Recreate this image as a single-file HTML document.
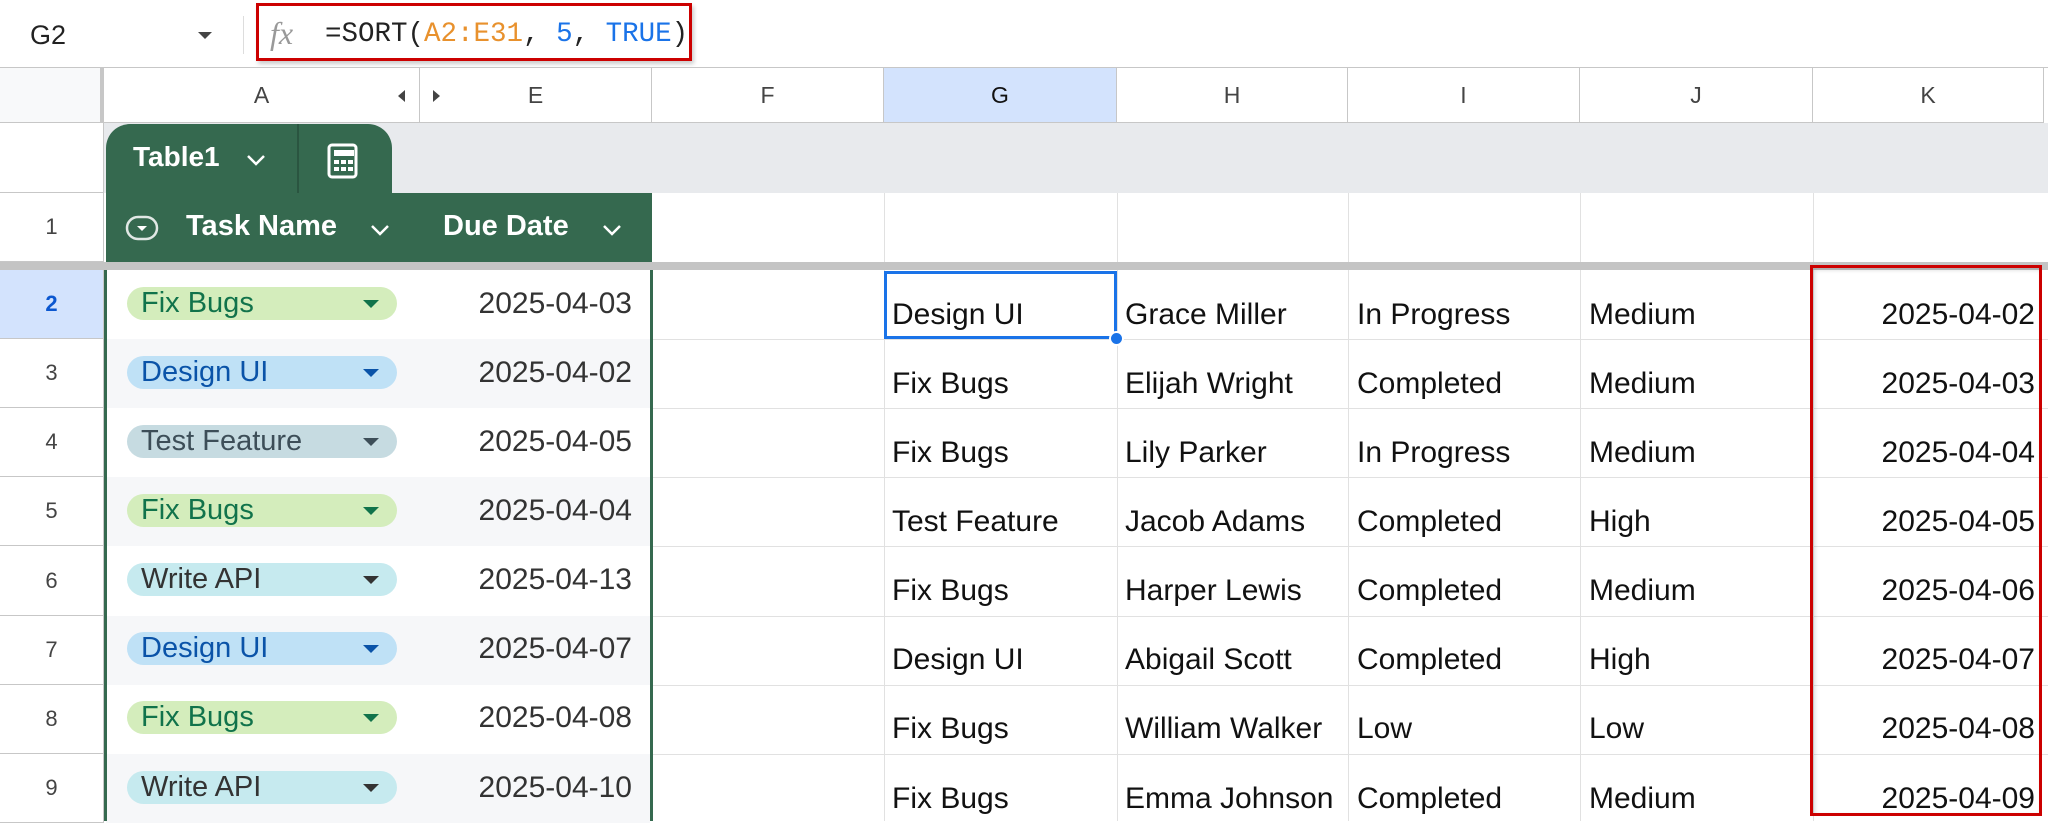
<!DOCTYPE html><html><head><style>
*{margin:0;padding:0;box-sizing:border-box}
body{width:2048px;height:821px;overflow:hidden;background:#fff;font-family:"Liberation Sans",Arial,sans-serif;position:relative;color:#1f1f1f}
.a{position:absolute}
.vl{position:absolute;width:1px;background:#e1e1e1}
.hl{position:absolute;height:1px;background:#e1e1e1}
.ch{position:absolute;top:68px;height:55px;font-size:23px;color:#444;display:flex;align-items:center;justify-content:center;border-right:1px solid #c7c7c7;border-bottom:1px solid #c7c7c7}
.rn{position:absolute;left:0;width:104px;font-size:22px;color:#444;display:flex;align-items:center;justify-content:center;border-bottom:1px solid #c7c7c7;border-right:1px solid #c7c7c7}
.pill{position:absolute;left:127px;width:270px;height:33px;border-radius:17px;font-size:29px;padding-left:14px;line-height:33px;white-space:nowrap}
.pill:after{content:"";position:absolute;right:18px;top:13px;border-left:8px solid transparent;border-right:8px solid transparent;border-top:8px solid currentColor}
.dt{position:absolute;left:420px;width:212px;text-align:right;font-size:30px;color:#333}
.c{position:absolute;font-size:30px;color:#111;white-space:nowrap}
</style></head><body>
<!-- formula bar -->
<div class="a" style="left:30px;top:20px;font-size:27px;color:#222">G2</div>
<div class="a" style="left:198px;top:32px;border-left:7px solid transparent;border-right:7px solid transparent;border-top:7px solid #444"></div>
<div class="a" style="left:243px;top:16px;width:1px;height:38px;background:#ddd"></div>
<div class="a" style="left:256px;top:3px;width:436px;height:58px;border:3px solid #c00;box-shadow:2px 3px 4px rgba(0,0,0,.2)"></div>
<div class="a" style="left:270px;top:15px;font-family:'Liberation Serif',serif;font-style:italic;font-size:32px;color:#999">fx</div>
<div class="a" style="left:325px;top:19px;font-family:'Liberation Mono',monospace;font-size:27.5px;color:#222;white-space:pre">=SORT(<span style="color:#e8912d">A2:E31</span>, <span style="color:#1a73e8">5</span>, <span style="color:#1a73e8">TRUE</span>)</div>
<div class="a" style="left:0;top:67px;width:2048px;height:1px;background:#c7c7c7"></div>
<!-- column headers -->
<div class="ch" style="left:0;width:104px;background:#f8f9fa;border-right:4px solid #c7c7c7"></div>
<div class="ch" style="left:104px;width:316px">A</div>
<div class="a" style="left:398px;top:90px;border-top:6px solid transparent;border-bottom:6px solid transparent;border-right:7px solid #444"></div>
<div class="a" style="left:433px;top:90px;border-top:6px solid transparent;border-bottom:6px solid transparent;border-left:7px solid #444"></div>
<div class="ch" style="left:420px;width:232px">E</div>
<div class="ch" style="left:652px;width:232px">F</div>
<div class="ch" style="left:884px;width:233px;background:#d3e3fd;color:#111">G</div>
<div class="ch" style="left:1117px;width:231px">H</div>
<div class="ch" style="left:1348px;width:232px">I</div>
<div class="ch" style="left:1580px;width:233px">J</div>
<div class="ch" style="left:1813px;width:231px">K</div>
<!-- tab row -->
<div class="a" style="left:104px;top:123px;width:1944px;height:70px;background:#e8eaed"></div>
<div class="rn" style="top:123px;height:70px"></div>
<div class="a" style="left:106px;top:124px;width:286px;height:70px;background:#35694f;border-radius:24px 24px 0 0"></div>
<div class="a" style="left:297px;top:124px;width:2px;height:69px;background:#2a5540"></div>
<div class="a" style="left:133px;top:141px;font-size:28px;font-weight:bold;color:#fff">Table1</div>
<svg class="a" style="left:245px;top:153px" width="22" height="14"><path d="M3 3l8 8 8-8" stroke="#fff" stroke-width="2.5" fill="none"/></svg>
<svg class="a" style="left:326px;top:140px" width="36" height="40"><rect x="3" y="5" width="27" height="32" rx="3" stroke="#fff" stroke-width="3" fill="none"/><rect x="8" y="10" width="20" height="6" fill="#fff"/><g fill="#fff"><rect x="8" y="20" width="5" height="4"/><rect x="15" y="20" width="5" height="4"/><rect x="22" y="20" width="5" height="4"/><rect x="8" y="27" width="5" height="4"/><rect x="15" y="27" width="5" height="4"/><rect x="22" y="27" width="5" height="4"/></g></svg>
<!-- row 1 -->
<div class="rn" style="top:193px;height:69px">1</div>
<div class="a" style="left:106px;top:193px;width:546px;height:69px;background:#35694f"></div>
<svg class="a" style="left:125px;top:215px" width="34" height="26"><rect x="2" y="2" width="30" height="22" rx="11" stroke="#fff" stroke-width="2.5" fill="none" opacity=".85"/><path d="M12 11h10l-5 5z" fill="#fff"/></svg>
<div class="a" style="left:186px;top:210px;font-size:29px;font-weight:bold;color:#fff">Task Name</div>
<svg class="a" style="left:369px;top:223px" width="22" height="14"><path d="M3 3l8 8 8-8" stroke="#fff" stroke-width="2.5" fill="none"/></svg>
<div class="a" style="left:443px;top:210px;font-size:29px;font-weight:bold;color:#fff">Due Date</div>
<svg class="a" style="left:601px;top:223px" width="22" height="14"><path d="M3 3l8 8 8-8" stroke="#fff" stroke-width="2.5" fill="none"/></svg>
<div class="vl" style="left:884px;top:193px;height:69px"></div><div class="vl" style="left:1117px;top:193px;height:69px"></div><div class="vl" style="left:1348px;top:193px;height:69px"></div><div class="vl" style="left:1580px;top:193px;height:69px"></div><div class="vl" style="left:1813px;top:193px;height:69px"></div>
<div class="a" style="left:0;top:262px;width:2048px;height:8px;background:#c4c4c4"></div>
<!-- data rows backgrounds -->
<div class="a" style="left:106px;top:339px;width:544px;height:69px;background:#f6f7f9"></div>
<div class="a" style="left:106px;top:477px;width:544px;height:69px;background:#f6f7f9"></div>
<div class="a" style="left:106px;top:616px;width:544px;height:69px;background:#f6f7f9"></div>
<div class="a" style="left:106px;top:754px;width:544px;height:69px;background:#f6f7f9"></div>
<div class="a" style="left:104px;top:270px;width:3px;height:551px;background:#35694f"></div>
<div class="a" style="left:650px;top:270px;width:3px;height:551px;background:#35694f"></div>
<!-- grid right -->
<div class="vl" style="left:884px;top:270px;height:551px"></div><div class="vl" style="left:1117px;top:270px;height:551px"></div><div class="vl" style="left:1348px;top:270px;height:551px"></div><div class="vl" style="left:1580px;top:270px;height:551px"></div><div class="vl" style="left:1813px;top:270px;height:551px"></div>
<div class="hl" style="left:653px;top:339px;width:1395px"></div><div class="hl" style="left:653px;top:408px;width:1395px"></div><div class="hl" style="left:653px;top:477px;width:1395px"></div><div class="hl" style="left:653px;top:546px;width:1395px"></div><div class="hl" style="left:653px;top:616px;width:1395px"></div><div class="hl" style="left:653px;top:685px;width:1395px"></div><div class="hl" style="left:653px;top:754px;width:1395px"></div>
<!-- row numbers -->
<div class="rn" style="top:270px;height:69px;background:#d3e3fd;color:#0b57d0;font-weight:bold">2</div>
<div class="rn" style="top:339px;height:69px">3</div>
<div class="rn" style="top:408px;height:69px">4</div>
<div class="rn" style="top:477px;height:69px">5</div>
<div class="rn" style="top:546px;height:70px">6</div>
<div class="rn" style="top:616px;height:69px">7</div>
<div class="rn" style="top:685px;height:69px">8</div>
<div class="rn" style="top:754px;height:69px">9</div>
<!-- pills -->
<div class="pill" style="top:287px;background:#d4edbc;color:#11734b">Fix Bugs</div>
<div class="pill" style="top:356px;background:#bfe1f6;color:#0a53a8">Design UI</div>
<div class="pill" style="top:425px;background:#c6dbe1;color:#3d4e58">Test Feature</div>
<div class="pill" style="top:494px;background:#d4edbc;color:#11734b">Fix Bugs</div>
<div class="pill" style="top:563px;background:#c6eaef;color:#333">Write API</div>
<div class="pill" style="top:632px;background:#bfe1f6;color:#0a53a8">Design UI</div>
<div class="pill" style="top:701px;background:#d4edbc;color:#11734b">Fix Bugs</div>
<div class="pill" style="top:771px;background:#c6eaef;color:#333">Write API</div>
<div class="dt" style="top:287px">2025-04-03</div>
<div class="dt" style="top:356px">2025-04-02</div>
<div class="dt" style="top:425px">2025-04-05</div>
<div class="dt" style="top:494px">2025-04-04</div>
<div class="dt" style="top:563px">2025-04-13</div>
<div class="dt" style="top:632px">2025-04-07</div>
<div class="dt" style="top:701px">2025-04-08</div>
<div class="dt" style="top:771px">2025-04-10</div>
<!-- sorted data -->
<div class="a" style="left:884px;top:271px;width:233px;height:68px;border:3px solid #1a73e8"></div>
<div class="a" style="left:1109px;top:331px;width:15px;height:15px;border-radius:50%;background:#1a73e8;border:2px solid #fff"></div>
<div class="c" style="left:892px;top:298px">Design UI</div><div class="c" style="left:1125px;top:298px">Grace Miller</div><div class="c" style="left:1357px;top:298px">In Progress</div><div class="c" style="left:1589px;top:298px">Medium</div><div class="c" style="left:1813px;width:222px;text-align:right;top:298px">2025-04-02</div>
<div class="c" style="left:892px;top:367px">Fix Bugs</div><div class="c" style="left:1125px;top:367px">Elijah Wright</div><div class="c" style="left:1357px;top:367px">Completed</div><div class="c" style="left:1589px;top:367px">Medium</div><div class="c" style="left:1813px;width:222px;text-align:right;top:367px">2025-04-03</div>
<div class="c" style="left:892px;top:436px">Fix Bugs</div><div class="c" style="left:1125px;top:436px">Lily Parker</div><div class="c" style="left:1357px;top:436px">In Progress</div><div class="c" style="left:1589px;top:436px">Medium</div><div class="c" style="left:1813px;width:222px;text-align:right;top:436px">2025-04-04</div>
<div class="c" style="left:892px;top:505px">Test Feature</div><div class="c" style="left:1125px;top:505px">Jacob Adams</div><div class="c" style="left:1357px;top:505px">Completed</div><div class="c" style="left:1589px;top:505px">High</div><div class="c" style="left:1813px;width:222px;text-align:right;top:505px">2025-04-05</div>
<div class="c" style="left:892px;top:574px">Fix Bugs</div><div class="c" style="left:1125px;top:574px">Harper Lewis</div><div class="c" style="left:1357px;top:574px">Completed</div><div class="c" style="left:1589px;top:574px">Medium</div><div class="c" style="left:1813px;width:222px;text-align:right;top:574px">2025-04-06</div>
<div class="c" style="left:892px;top:643px">Design UI</div><div class="c" style="left:1125px;top:643px">Abigail Scott</div><div class="c" style="left:1357px;top:643px">Completed</div><div class="c" style="left:1589px;top:643px">High</div><div class="c" style="left:1813px;width:222px;text-align:right;top:643px">2025-04-07</div>
<div class="c" style="left:892px;top:712px">Fix Bugs</div><div class="c" style="left:1125px;top:712px">William Walker</div><div class="c" style="left:1357px;top:712px">Low</div><div class="c" style="left:1589px;top:712px">Low</div><div class="c" style="left:1813px;width:222px;text-align:right;top:712px">2025-04-08</div>
<div class="c" style="left:892px;top:782px">Fix Bugs</div><div class="c" style="left:1125px;top:782px">Emma Johnson</div><div class="c" style="left:1357px;top:782px">Completed</div><div class="c" style="left:1589px;top:782px">Medium</div><div class="c" style="left:1813px;width:222px;text-align:right;top:782px">2025-04-09</div>
<div class="a" style="left:1810px;top:265px;width:232px;height:551px;border:3px solid #c00;box-shadow:inset 2px 2px 4px rgba(0,0,0,.15)"></div>
</body></html>
